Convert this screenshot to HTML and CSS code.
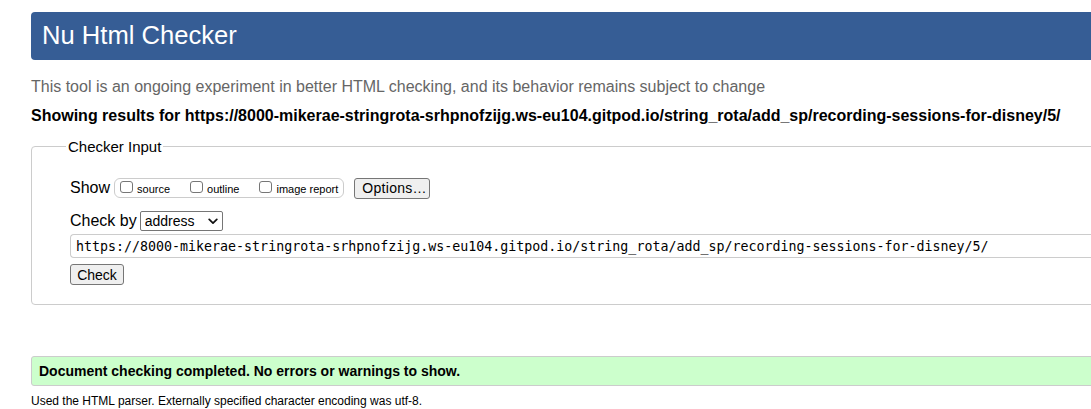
FILE: index.html
```html
<!DOCTYPE html>
<html lang="en">
<head>
<meta charset="utf-8">
<title>Nu Html Checker</title>
<link rel="stylesheet" href="styles.css">
</head>
<body>
<div class="page">
  <h1 class="banner">Nu Html Checker</h1>
  <p class="tagline">This tool is an ongoing experiment in better HTML checking, and its behavior remains subject to change</p>
  <p class="showing">Showing results for https://8000-mikerae-stringrota-srhpnofzijg.ws-eu104.gitpod.io/string_rota/add_sp/recording-sessions-for-disney/5/</p>
  <fieldset class="inputs">
    <legend class="legend">Checker Input</legend>
    <div class="row show-row">
      <span class="label">Show</span>
      <span class="group">
        <label class="opt"><input type="checkbox" class="cb">source</label>
        <label class="opt"><input type="checkbox" class="cb">outline</label>
        <label class="opt"><input type="checkbox" class="cb">image report</label>
      </span>
      <button class="btn options" type="button">Options…</button>
    </div>
    <div class="row by-row">
      <span class="label">Check by</span>
      <span class="select-wrap">
        <select class="select"><option>address</option></select>
        <svg class="chev" width="10" height="7" viewBox="0 0 10 7"><path d="M1.2 1.4 L5 5.2 L8.8 1.4" fill="none" stroke="#111" stroke-width="1.7" stroke-linecap="round" stroke-linejoin="round"/></svg>
      </span>
    </div>
    <div class="url">https://8000-mikerae-stringrota-srhpnofzijg.ws-eu104.gitpod.io/string_rota/add_sp/recording-sessions-for-disney/5/</div>
    <div class="row"><button class="btn check" type="button">Check</button></div>
  </fieldset>
  <p class="success">Document checking completed. No errors or warnings to show.</p>
  <p class="details">Used the HTML parser. Externally specified character encoding was utf-8.</p>
</div>
</body>
</html>
```

FILE: styles.css
```css
html { overflow: hidden; }
body {
  margin: 0;
  font-family: "Liberation Sans", Arial, sans-serif;
  color: #000;
  background: #fff;
}
.page {
  padding: 12px 0 0 31px;
  margin-right: -60px;
}
.banner {
  margin: 0;
  height: 48px;
  box-sizing: border-box;
  padding: 8px 11px 0;
  background: #365d95;
  color: #fff;
  font-weight: normal;
  font-size: 25.6px;
  line-height: 30px;
  border-radius: 4px 0 0 4px;
}
.tagline {
  margin: 17px 0 0;
  font-size: 16px;
  line-height: 20px;
  color: #666;
}
.showing {
  margin: 9px 0 0;
  font-size: 16px;
  line-height: 20px;
  font-weight: bold;
}
.inputs {
  margin: 12px 0 0;
  padding: 23px 38px 19px;
  border: 1px solid #ccc;
  border-radius: 4px 0 0 4px;
  min-width: 0;
}
.legend {
  margin-left: -4px;
  padding: 0 2px;
  font-size: 15px;
}
.row {
  display: flex;
  align-items: center;
}
.label {
  font-size: 16px;
  line-height: 20px;
}
.show-row {
  height: 20px;
}
.group {
  display: flex;
  align-items: center;
  gap: 20px;
  margin-left: 4px;
  height: 18px;
  padding: 0 5px 0 5px;
  border: 1px solid #ccc;
  border-radius: 6px;
  font-size: 11px;
}
.opt {
  display: flex;
  align-items: center;
  gap: 4px;
  line-height: 12px;
  padding-top: 1px;
}
.cb {
  appearance: none;
  margin: 0;
  width: 13px;
  height: 12px;
  border: 1px solid #767676;
  border-radius: 3px;
  background: #fff;
  position: relative;
  top: -2px;
}
.btn {
  font-family: "Liberation Sans", Arial, sans-serif;
  font-size: 14px;
  background: #efefef;
  border: 1px solid #767676;
  border-radius: 3px;
  color: #000;
  padding: 0 7px;
  line-height: 18px;
  height: 21px;
}
.options {
  margin-left: 10px;
  width: 76px;
  letter-spacing: 0.3px;
}
.by-row {
  margin-top: 13px;
  height: 20px;
}
.select-wrap {
  position: relative;
  margin-left: 3px;
  display: inline-flex;
}
.select {
  appearance: none;
  font-family: "Liberation Sans", Arial, sans-serif;
  font-size: 14px;
  width: 83px;
  height: 20px;
  padding: 0 0 0 4px;
  border: 1px solid #767676;
  border-radius: 2px;
  background: #fff;
  color: #000;
  line-height: 18px;
}
.chev {
  position: absolute;
  right: 5px;
  top: 7px;
  pointer-events: none;
}
.url {
  margin-top: 3px;
  height: 24px;
  box-sizing: border-box;
  border: 1px solid #ccc;
  border-right: 0;
  border-radius: 4px 0 0 4px;
  padding: 3px 0 0 5px;
  font-family: "DejaVu Sans Mono", Menlo, monospace;
  font-size: 13.3px;
  line-height: 17px;
  white-space: nowrap;
  overflow: hidden;
}
.check {
  margin-top: 6px;
  width: 54px;
  padding: 0;
}
.success {
  margin: 51px 0 0;
  height: 30px;
  box-sizing: border-box;
  padding: 6px 7px 0;
  background: #ccffcc;
  border: 1px solid #ccc;
  border-radius: 3px 0 0 3px;
  font-weight: bold;
  font-size: 14px;
  line-height: 17px;
}
.details {
  margin: 8px 0 0;
  font-size: 12px;
  line-height: 14px;
}
```
